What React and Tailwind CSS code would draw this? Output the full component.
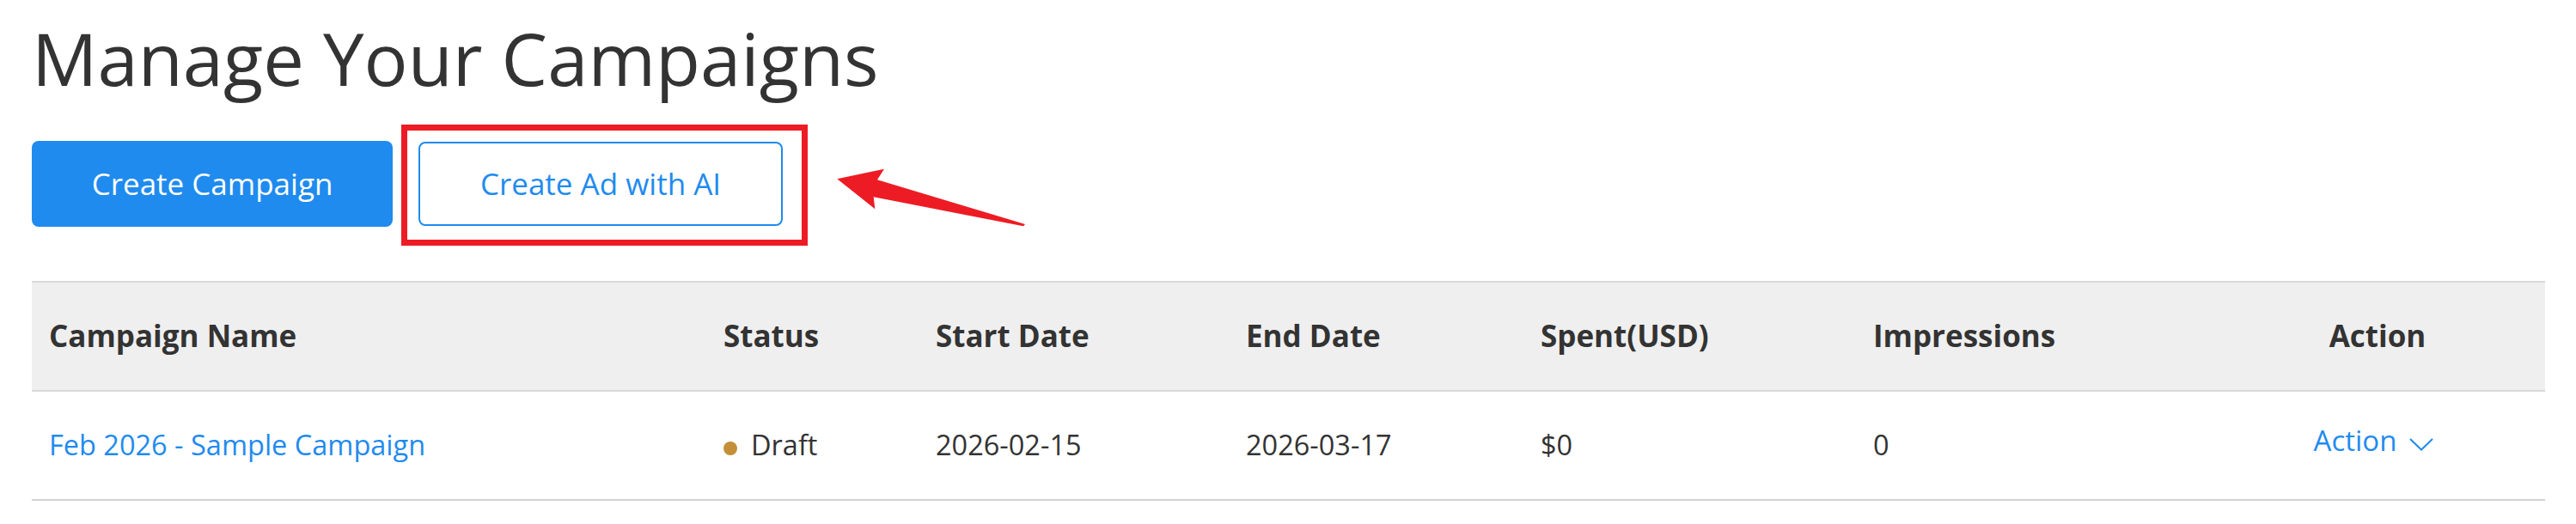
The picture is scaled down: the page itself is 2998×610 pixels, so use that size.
import React from "react";

const columns = [
  "Campaign Name",
  "Status",
  "Start Date",
  "End Date",
  "Spent(USD)",
  "Impressions",
];

export default function App() {
  return (
    <div className="min-h-[610px] bg-white pl-[37px] pr-[36px] font-['Open_Sans',sans-serif] text-[#333333]">
      <h1 className="pt-[25px] h-[109px] text-[85px] leading-[84px] font-normal">
        Manage Your Campaigns
      </h1>

      <div className="relative mt-[36px] flex items-start">
        <button className="mt-[19px] w-[420px] h-[100px] rounded-[8px] bg-[#1f8bee] text-white text-[35px]">
          Create Campaign
        </button>

        {/* highlight box around the AI button */}
        <div className="ml-[10px] border-[7px] border-[#ed1c24] pt-[13px] pl-[13px] pr-[22px] pb-[16px]">
          <button className="w-[424px] h-[98px] rounded-[8px] border-2 border-[#1f8bee] bg-white text-[#1f8bee] text-[35px]">
            Create Ad with AI
          </button>
        </div>

        <svg
          className="absolute left-[923px] top-[35px]"
          width="250"
          height="100"
          viewBox="0 0 250 100"
        >
          <polygon
            fill="#ed1c24"
            points="14.3,28.3 69,16.7 61,29.3 233,81 231,83.3 56.7,49.3 58.3,63.3"
          />
        </svg>
      </div>

      <div className="mt-[41px] w-[2925px] border-t-2 border-[#d9d9d9]">
        <div className="grid grid-cols-[785px_247px_361px_343px_387px_412px_390px] h-[127px] bg-[#efefef] border-b-2 border-[#d9d9d9] text-[35px] font-bold">
          {columns.map((c) => (
            <div key={c} className="flex items-center pl-[20px]">
              {c}
            </div>
          ))}
          <div className="flex items-center justify-center">Action</div>
        </div>

        <div className="grid grid-cols-[785px_247px_361px_343px_387px_412px_390px] h-[127px] border-b-2 border-[#d2d2d2] text-[32.5px]">
          <div className="flex items-center pl-[20px]">
            <a className="text-[#1f8bee] cursor-pointer">Feb 2026 - Sample Campaign</a>
          </div>
          <div className="flex items-center pl-[20px]">
            <span className="mt-[6px] mr-[16px] w-[16px] h-[16px] rounded-full bg-[#c48f38]" />
            Draft
          </div>
          <div className="flex items-center pl-[20px]">2026-02-15</div>
          <div className="flex items-center pl-[20px]">2026-03-17</div>
          <div className="flex items-center pl-[20px]">$0</div>
          <div className="flex items-center pl-[20px]">0</div>
          <div className="flex items-center justify-center pr-[9px]">
            <button className="flex items-center pb-[12px] text-[33px] text-[#1f8bee]">
              Action
              <svg className="ml-[15px] mt-[10px]" width="28" height="15" viewBox="0 0 28 15" fill="none">
                <path d="M1 1 L14 13.5 L27 1" stroke="#1f8bee" strokeWidth="2" />
              </svg>
            </button>
          </div>
        </div>
      </div>
    </div>
  );
}
